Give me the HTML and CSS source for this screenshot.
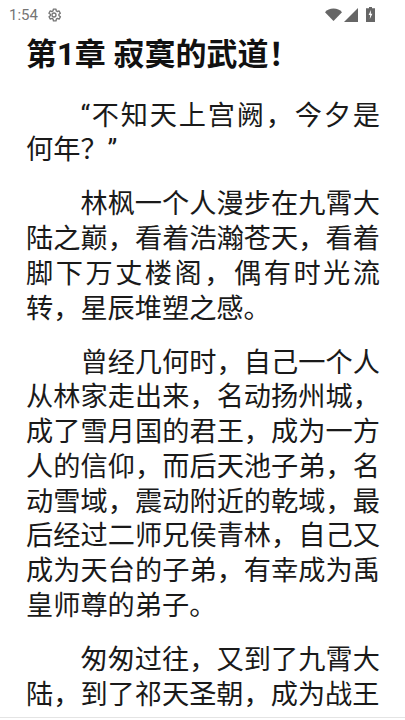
FILE: index.html
```html
<!DOCTYPE html>
<html lang="zh-CN">
<head>
  <meta charset="UTF-8" />
  <meta name="viewport" content="width=device-width, initial-scale=1.0" />
  <title>第1章 寂寞的武道！</title>
  <link rel="stylesheet" href="styles.css">
</head>
<body>
  <div class="status-bar">
    <span class="time">1:54</span>
    <svg class="gear" viewBox="0 0 24 24" width="16" height="16">
      <path d="M19.4 13a7.6 7.6 0 0 0 0-2l2.100-1.600-2-3.500-2.500 1a7.500 7.500 0 0 0-1.700-1L15 3.200h-4l-.4 2.700a7.500 7.500 0 0 0-1.700 1l-2.500-1-2 3.500L6.600 11a7.600 7.600 0 0 0 0 2l-2.100 1.600 2 3.500 2.500-1a7.500 7.500 0 0 0 1.700 1l.4 2.700h4l.4-2.700a7.500 7.500 0 0 0 1.700-1l2.500 1 2-3.500z" fill="none" stroke="#757575" stroke-width="2" stroke-linejoin="round"/>
      <circle cx="12" cy="12" r="3" fill="none" stroke="#757575" stroke-width="2"/>
    </svg>
    <div class="status-icons">
      <svg viewBox="0 0 17 13" width="17" height="13"><path d="M0 4.200C2 1.800 5 .5 8.500.5S15 1.800 17 4.200L8.500 13z" fill="#666"/></svg>
      <svg viewBox="0 0 14 14" width="14" height="14"><path d="M14 0v14H0z" fill="#666"/></svg>
      <svg class="battery" viewBox="0 0 9 15" width="9" height="15">
        <path d="M3 0h3v1.200h3V15H0V1.200h3z" fill="#666"/>
        <path d="M5 3 2.600 8h1.600L3.800 12 6.400 6.800H4.800z" fill="#fff"/>
      </svg>
    </div>
  </div>

  <div class="chapter">
    <h1 class="chapter-title">第1章 寂寞的武道！</h1>
    <p>“不知天上宫阙，今夕是何年？”</p>
    <p>林枫一个人漫步在九霄大陆之巅，看着浩瀚苍天，看着脚下万丈楼阁，偶有时光流转，星辰堆塑之感。</p>
    <p>曾经几何时，自己一个人从林家走出来，名动扬州城，成了雪月国的君王，成为一方人的信仰，而后天池子弟，名动雪域，震动附近的乾域，最后经过二师兄侯青林，自己又成为天台的子弟，有幸成为禹皇师尊的弟子。</p>
    <p>匆匆过往，又到了九霄大陆，到了祁天圣朝，成为战王</p>
  </div>
  <div class="bottom-line"></div>
</body>
</html>
```
FILE: styles.css
```css
html, body {
  margin: 0;
  padding: 0;
  height: 720px;
  overflow: hidden;
  background: #ffffff;
  font-family: Roboto, "Noto Sans CJK SC", sans-serif;
}

body {
  position: relative;
}

.status-bar {
  height: 29px;
  display: flex;
  align-items: center;
  padding: 0 30px 0 9px;
  color: #757575;
  font-size: 15px;
}

.gear {
  margin-left: 8px;
}

.status-icons {
  margin-left: auto;
  display: flex;
  align-items: center;
  gap: 2px;
}

.battery {
  margin-left: 6px;
}

.chapter {
  padding: 0 25px 0 26px;
  color: #1a1a1a;
}

.chapter-title {
  margin: 6px 0 23.5px;
  font-size: 31px;
  line-height: 40px;
  font-weight: 700;
  color: #111;
}

.chapter p {
  margin: 0 0 19.5px;
  font-size: 27.2px;
  line-height: 34.7px;
  text-indent: 2em;
  text-align: justify;
}

.bottom-line {
  position: absolute;
  left: 0;
  right: 0;
  bottom: 2px;
  height: 1px;
  background: #e4e4e4;
}
```
